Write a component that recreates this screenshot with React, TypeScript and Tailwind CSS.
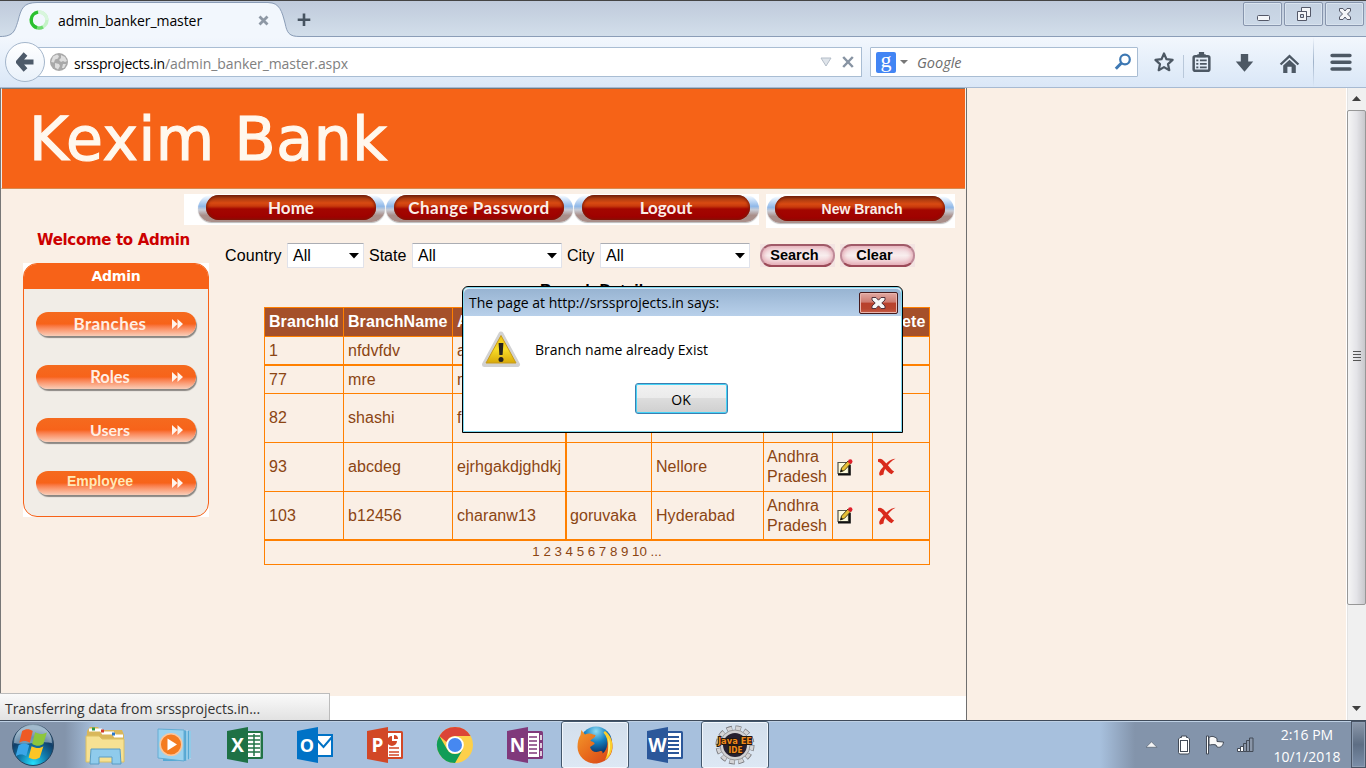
import type { ReactNode } from "react";

const UI = "font-['Open_Sans','Noto_Sans',sans-serif] whitespace-nowrap";

function Spinner() {
  return (
    <svg width="20" height="20" viewBox="0 0 20 20" fill="none" strokeWidth="3.4">
      <circle cx="10" cy="10" r="8" stroke="#c4f3c6" />
      <path d="M10 2a8 8 0 0 1 8 8" stroke="#d8f6dc" />
      <path d="M14 17A8 8 0 0 1 4 15.300" stroke="#6fdc70" />
      <path d="M8 17.700A8 8 0 0 1 9 2.100" stroke="#2ac02f" />
    </svg>
  );
}

function Globe() {
  return (
    <svg width="18" height="18" viewBox="0 0 18 18">
      <circle cx="9" cy="9" r="9" fill="#a9a9a9" />
      <path d="M3 3.500 7 1.500l2 1.500-1 2.500-3 1-1 3-2.800-.5zM11 2l4 2 2 4-2 1-2-1-2 1-2-2 2-2zM5 10l4 1 1 2-2 3.500-3-2zM13 11l3 0-2 4-2 0z" fill="#dedede" />
    </svg>
  );
}

function TabStrip() {
  return (
    <div className="relative flex h-[37px] shrink-0 border-t border-[#444] bg-gradient-to-b from-[#bfcadb] to-[#d3dfeb]">
      <svg className="absolute left-0 top-0" width="1366" height="36" viewBox="0 1 1366 36" fill="none">
        <path d="M0 37C15 37 15 30 18 21C21 9 23 3 37 3H268C282 3 282 14 285 23C288 33 288 37 300 37Z" fill="#f2f7fd" />
        <path d="M0 36.500C14 36.500 15 30 18 21C21 9 23 2.500 37 2.500H268C280 2.500 282 12 285 23C287 33 289 36.500 300 36.500H1366" stroke="#8b9db7" />
      </svg>
      <div className="relative flex h-[36px] w-[1243px] items-center pl-[29px] pt-[2px]">
        <Spinner />
        <span className={`${UI} ml-[9px] w-[204px] text-[14px] tracking-[-0.08px] text-black`}>admin_banker_master</span>
        <svg className="-ml-[4px]" width="11" height="11" viewBox="0 0 11 11"><path d="M1.500 1.500l8 8M9.500 1.500l-8 8" stroke="#8e98a5" strokeWidth="2.800" /></svg>
        <svg className="ml-[28px]" width="14" height="14" viewBox="0 0 14 14"><path d="M7 .5v12.500M.7 6.800h12.600" stroke="#465360" strokeWidth="2.600" /></svg>
      </div>
      <div className="relative flex gap-[2px] pt-[1px]">
        {[0, 1, 2].map((i) => (
          <div key={i} className="flex h-[24px] w-[39px] items-center justify-center rounded-[2px] border border-[#8795ad] bg-gradient-to-b from-[#c5d1e1] to-[#cbd8e7] shadow-[inset_0_0_0_1px_#d9e3ee]">
            <svg width="16" height="16" viewBox="0 0 16 16" fill="#f4f6f9" stroke="#545868">
              {i === 0 && <rect x="2.500" y="9.500" width="12" height="5" rx="1" />}
              {i === 1 && (
                <>
                  <path d="M5.500 1.500h9v9h-4v-5h-5z" />
                  <path fillRule="evenodd" d="M1.500 5.500h9v9h-9zM4.500 8.500h3v3h-3z" />
                </>
              )}
              {i === 2 && <path d="M2.500 2.500h3.500l2 2.500 2-2.500h3.500v2.500l-3 3 3 3v2.500H10l-2-2.500-2 2.500H2.500V11l3-3-3-3z" />}
            </svg>
          </div>
        ))}
      </div>
    </div>
  );
}

function NavBar() {
  return (
    <div className="relative flex h-[51px] shrink-0 items-start border-b border-[#a7bad2] bg-gradient-to-b from-[#f2f7fd] via-[#e6effa] to-[#dae7f7]">
      <div className="z-10 ml-[5px] mt-[5px] flex h-[40px] w-[40px] items-center justify-center rounded-full border border-[#a4b6cb] bg-gradient-to-b from-white to-[#e9f1fa]">
        <svg width="18" height="20" viewBox="0 0 18 20"><path d="M9.500 2 2.500 10l7 8M3 10h14.500" fill="none" stroke="#4d5a69" strokeWidth="5" /></svg>
      </div>
      <div className="-ml-[9px] mt-[10px] flex h-[30px] w-[826px] items-center border border-[#a9bdd3] bg-white pl-[13px]">
        <Globe />
        <div className={`${UI} ml-[6px] flex w-[746px] pt-[2px] text-[14px]`}>
          <span className="tracking-[-0.2px] text-black">srssprojects.in</span>
          <span className="tracking-[-0.07px] text-[#808080]">/admin_banker_master.aspx</span>
        </div>
        <svg width="12" height="10" viewBox="0 0 12 10"><path d="M1 1h10L6 9z" fill="#dfe4ea" stroke="#b4bdc8" /></svg>
        <svg className="ml-[10px]" width="12" height="12" viewBox="0 0 12 12"><path d="M1.200 1l9.600 10M10.800 1 1.200 11" stroke="#8894a3" strokeWidth="2.500" /></svg>
      </div>
      <div className="ml-[8px] mt-[10px] flex h-[30px] w-[268px] items-center rounded-[1px] border border-[#a9bdd3] bg-white pl-[5px]">
        <div className="flex h-[21px] w-[20px] items-center justify-center rounded-[2px] bg-[#4285f4] pb-[4px] font-['Liberation_Serif',serif] text-[22px] leading-none text-white">g</div>
        <svg className="ml-[4px]" width="8" height="4" viewBox="0 0 8 4"><path d="M0 0h8L4 4z" fill="#777" /></svg>
        <span className={`${UI} ml-[9px] w-[197px] pt-[2px] text-[14.500px] italic text-[#6d6d6d]`}>Google</span>
        <svg width="18" height="18" viewBox="0 0 18 18" fill="none" stroke="#3d78b3"><circle cx="11" cy="6.500" r="4.800" strokeWidth="2.200" /><path d="M7.500 10 1.800 15.800" strokeWidth="3" /></svg>
      </div>
      <svg className="ml-[14px] mt-[13px]" width="22" height="24" viewBox="0 0 22 24"><path d="M12 3.500l2.500 5.700 6.100.7-4.600 4.200 1.300 6.100L12 17.100l-5.300 3.100L8 14.100 3.400 9.900l6.100-.7z" fill="none" stroke="#4d5864" strokeWidth="2.200" strokeLinejoin="round" /></svg>
      <div className="ml-[9px] mt-[18px] h-[23px] w-px bg-[#b9c8da]" />
      <svg className="ml-[7px] mt-[14px]" width="21" height="23" viewBox="0 0 20 22" fill="none" stroke="#4d5864">
        <rect x="2.500" y="5" width="15" height="14" rx="1.500" strokeWidth="2.400" />
        <path d="M6 4.500h8M7.500 2.500h5" strokeWidth="3" />
        <path d="M5 9h2M8.500 9H15M5 12.300h2M8.500 12.300H15M5 15.600h2M8.500 15.600H15" strokeWidth="1.600" />
      </svg>
      <svg className="ml-[23px] mt-[16px]" width="19" height="20" viewBox="0 0 18 19"><path d="M5.500 1h7v7h4.800L9 17.800.7 8h4.800z" fill="#4d5864" /></svg>
      <svg className="ml-[25px] mt-[17px]" width="21" height="20" viewBox="0 0 20 19"><path d="M1.500 10 10 2l8.500 8" fill="none" stroke="#4d5864" strokeWidth="2.200" /><path d="M4 11l6-5.600L16 11v7h-4v-6H8v6H4z" fill="#4d5864" /></svg>
      <div className="ml-[13px] h-[50px] w-px bg-gradient-to-b from-transparent via-[#9fb2c9] to-transparent" />
      <svg className="ml-[16px] mt-[16px]" width="22" height="19" viewBox="0 0 21 18"><path d="M2 2.300h17M2 8.800h17M2 15.200h17" stroke="#4d5864" strokeWidth="3.400" strokeLinecap="round" /></svg>
    </div>
  );
}

function RedPill({ children, w, text }: { children: ReactNode; w: string; text: string }) {
  return (
    <div className={`flex h-[27px] ${w} items-start rounded-full bg-[linear-gradient(180deg,#fff_0,#dcebfc_12%,#8fb8e8_42%,#c9cdd6_55%,#a98f8a_75%,#a98f8a_100%)] pl-[8px] pr-[9px] shadow-[0_1px_1px_#bbb]`}>
      <div className="flex h-[25px] grow items-center justify-center rounded-full bg-[linear-gradient(180deg,#6b2a10_0,#a83a10_12%,#d94a12_32%,#c83a0c_44%,#a30600_56%,#9e0000_100%)] shadow-[inset_0_0_3px_1px_#7a1a08]">
        <span className={`whitespace-nowrap text-[#fbeee8] ${text}`}>{children}</span>
      </div>
    </div>
  );
}

const GOTHIC = "font-['Lato',sans-serif] font-bold";

function Select({ w }: { w: string }) {
  return (
    <div className={`flex h-[25px] ${w} items-center justify-between rounded-[1px] border border-[#e0e2ea] border-t-[#abadb3] bg-white pl-[5px] pr-[4px] text-black`}>
      <span>All</span>
      <svg width="10" height="6" viewBox="0 0 10 6"><path d="M0 0h10L5 5.500z" fill="#000" /></svg>
    </div>
  );
}

function PinkPill({ children }: { children: string }) {
  return (
    <div className="h-[23px] w-[75px] bg-[#f3e4e2]">
      <div className="flex h-[23px] w-[75px] items-center justify-center rounded-full border-2 border-[#c08a98] border-b-[#9c4a58] border-t-[#a05a68] bg-gradient-to-b from-[#efd3d8] via-[#f8eeee] to-[#ecc4ca] pr-[6px] shadow-[inset_0_0_5px_1px_#e3a5b0]">
        <span className="font-['Liberation_Sans',sans-serif] text-[14.500px] font-bold text-black">{children}</span>
      </div>
    </div>
  );
}

function SideButton({ label, text }: { label: string; text: string }) {
  return (
    <div className="relative flex h-[24px] w-[160px] items-center rounded-full bg-gradient-to-b from-[#f56a1e] via-[#f7631a] via-50% to-[#f8cdb8] shadow-[1px_2px_1px_#8b8783]">
      <span className={`w-[148px] whitespace-nowrap text-center ${text}`}>{label}</span>
      <svg className="absolute left-[135px] top-[7px]" width="13" height="10" viewBox="0 0 13 10"><path d="M1 0l5.500 5L1 10zM6.500 0 12 5l-5.500 5z" fill="#fff4ec" /></svg>
    </div>
  );
}

function EditIcon() {
  return (
    <svg width="16" height="17" viewBox="0 0 16 17">
      <path d="M1 3.500h10.500v11H1z" fill="#fdfbdc" stroke="#55554c" strokeWidth="1.200" />
      <path d="M12.800 6v9.500H1" fill="none" stroke="#111" strokeWidth="2" />
      <path d="M3.500 13l1-4 6.500-7 3 2.300-6.500 7z" fill="#e8c136" stroke="#3a3210" strokeWidth=".9" />
      <path d="M3.300 13.300l.8-3 2 1.600z" fill="#111" />
      <circle cx="13.300" cy="2.500" r="2.200" fill="#e0202c" />
    </svg>
  );
}

function DeleteIcon() {
  return (
    <svg width="19" height="18" viewBox="0 0 19 18" fill="#d92a1c">
      <path d="M1 1.200C3.500-.2 5.500 1.200 7.500 3.500l4.500 5c1.500 2 3.500 4.500 5.200 5l-2.600 2.700C11.500 15 9 12 7.200 9.500 5 6.500 3.800 4.500 1 3.700z" />
      <path d="M18.500.8C15 2.200 11.500 6.500 8.700 10c-1.300 2-2 4-2.200 6.500L3 17.800c-1.800-2-.3-5 2.200-7.800C8.500 6.500 12.500 1 18.500.8z" />
    </svg>
  );
}

type Row = { h: string; thick?: boolean; cells: string[]; head?: boolean };
const rows: Row[] = [
  { h: "h-[29px]", head: true, cells: ["BranchId", "BranchName", "Address", "Location", "City", "State", "Edit", "Delete"] },
  { h: "h-[28px]", cells: ["1", "nfdvfdv", "a", "", "", "", "", ""] },
  { h: "h-[29px]", thick: true, cells: ["77", "mre", "m", "", "", "", "", ""] },
  { h: "h-[49px]", cells: ["82", "shashi", "f", "", "", "Andhra Pradesh", "", ""] },
  { h: "h-[49px]", cells: ["93", "abcdeg", "ejrhgakdjghdkj", "", "Nellore", "Andhra Pradesh", "edit", "delete"] },
  { h: "h-[48px]", cells: ["103", "b12456", "charanw13", "goruvaka", "Hyderabad", "Andhra Pradesh", "edit", "delete"] },
];
const COLS = ["w-[79px]", "w-[109px]", "w-[113px]", "w-[86px]", "w-[112px]", "w-[69px]", "w-[40px]", "w-[57px]"];

function BranchTable() {
  return (
    <div className="ml-[56px] mt-[6px] w-[666px] border-b border-r border-[#ff8000] text-[16px] leading-[20px] tracking-[0.07px] text-[#8b4513]">
      {rows.map((r) => (
        <div key={r.cells[0]} className={`flex ${r.h} ${r.head ? "bg-[#a5502a] font-bold text-white" : ""}`}>
          {r.cells.map((c, i) => (
            <div key={i} className={`${COLS[i]} flex shrink-0 items-center border-[#ff8000] ${i === 3 || i === 5 ? "pl-[3px]" : "pl-[4px]"} ${r.thick ? "border-t-2" : "border-t"} ${i === 3 ? "border-l-2" : "border-l"}`}>
              {c === "edit" ? <EditIcon /> : c === "delete" ? <DeleteIcon /> : c}
            </div>
          ))}
        </div>
      ))}
      <div className="flex h-[25px] items-center justify-center border-l border-t-2 border-[#ff8000] pb-[2px] font-['Liberation_Sans',sans-serif] text-[13.300px] tracking-normal">
        1 2 3 4 5 6 7 8 9 10 ...
      </div>
    </div>
  );
}

function Page() {
  return (
    <div className="flex h-[632px] w-[967px] shrink-0 flex-col border-r border-[#6e6e6e] bg-white">
      <div className="h-[608px] border-l border-[#777] bg-[#faefe5] pr-px font-['Liberation_Sans',sans-serif]">
        <div className="flex h-[101px] items-center border-y border-l border-[#777] border-b-[#d88a50] border-l-[#eee] bg-[#f66317] pl-[27px]">
          <span className="font-['DejaVu_Sans',sans-serif] text-[60px] leading-none tracking-[0.6px] text-[#fff8ee] [-webkit-text-stroke:1.2px_#fff8ee]">Kexim Bank</span>
        </div>
        <div className="flex">
          <div className="ml-[22px] w-[185px] shrink-0">
            <div className="mt-[41px] whitespace-nowrap pl-[14px] font-['DejaVu_Sans',sans-serif] text-[15px] font-bold leading-[20px] tracking-[-0.32px] text-[#cc0000]">Welcome to Admin</div>
            <div className="mt-[13px] w-[186px] bg-white">
              <div className="flex h-[254px] flex-col items-center overflow-hidden rounded-[14px] border border-[#f76218] bg-[#f1ede7]">
                <div className="flex h-[25px] w-full shrink-0 items-center justify-center bg-[#f76218] font-['DejaVu_Sans',sans-serif] text-[14px] font-bold tracking-[-0.2px] text-white">Admin</div>
                <div className="flex flex-col gap-[29px] pt-[23px]">
                  <SideButton label="Branches" text={`${GOTHIC} text-[17px] tracking-[0.4px] text-[#ffeee3]`} />
                  <SideButton label="Roles" text={`${GOTHIC} text-[16.500px] text-[#ffeee3]`} />
                  <SideButton label="Users" text={`${GOTHIC} text-[16px] text-[#ffeee3]`} />
                  <SideButton label="Employee" text="font-bold text-[14px] text-[#ffe9b8] pr-[20px] pb-[3px]" />
                </div>
              </div>
            </div>
          </div>
          <div className="flex grow flex-col">
            <div className="-ml-[24px] mt-[5px] flex items-start gap-[7px]">
              <div className="flex h-[31px] w-[575px] gap-[1px] bg-white pl-[14px] pt-[1px]">
                <RedPill w="w-[187px]" text={`${GOTHIC} text-[17px]`}>Home</RedPill>
                <RedPill w="w-[187px]" text={`${GOTHIC} text-[17px] tracking-[0.5px]`}>Change Password</RedPill>
                <RedPill w="w-[185px]" text={`${GOTHIC} text-[17px]`}>Logout</RedPill>
              </div>
              <div className="h-[34px] w-[189px] bg-white pl-px pt-[2px]">
                <RedPill w="w-[187px]" text="font-bold text-[14px] pl-[4px] pt-[1px]">New Branch</RedPill>
              </div>
            </div>
            <div className="ml-[17px] mt-[15px] flex items-center text-[16px] text-black">
              <span className="w-[57px] tracking-[0.1px]">Country</span>
              <div className="ml-[5px]"><Select w="w-[77px]" /></div>
              <span className="ml-[5px] w-[43px]">State</span>
              <Select w="w-[150px]" />
              <span className="ml-[5px] w-[33px]">City</span>
              <Select w="w-[150px]" />
              <div className="ml-[10px] flex gap-[5px]">
                <PinkPill>Search</PinkPill>
                <PinkPill>Clear</PinkPill>
              </div>
            </div>
            <div className="mt-[13px] h-[20px] pl-[332px] text-[16px] font-bold leading-[20px] text-black">Branch Details</div>
            <BranchTable />
          </div>
        </div>
      </div>
    </div>
  );
}

function ScrollBar() {
  return (
    <div className="ml-auto flex w-[20px] flex-col items-center border-l border-[#fff] bg-[#f0f0f0] shadow-[inset_1px_0_0_#e3e3e3]">
      <svg className="mt-[8px]" width="9" height="5" viewBox="0 0 9 5"><path d="M4.500 0 9 5H0z" fill="#404040" /></svg>
      <div className="mt-[9px] flex h-[495px] w-[19px] items-center justify-center rounded-[2px] border border-[#979797] bg-gradient-to-r from-[#f5f5f5] via-[#e4e4e8] to-[#c8c8cc]">
        <div className="-mt-[3px] flex flex-col gap-[2px]">{[0, 1, 2, 3].map((i) => <div key={i} className="h-px w-[8px] bg-[#555]" />)}</div>
      </div>
      <svg className="mt-[101px]" width="9" height="5" viewBox="0 0 9 5"><path d="M0 0h9L4.500 5z" fill="#404040" /></svg>
    </div>
  );
}

function Alert() {
  return (
    <div className="absolute left-[462px] top-[286px] h-[147px] w-[441px] rounded-t-[6px] border border-black bg-white shadow-[inset_0_0_0_1px_#7fd8f0]">
      <div className="mx-px mt-px flex h-[28px] items-center justify-between rounded-t-[5px] border-t border-[#d8e6f5] bg-gradient-to-b from-[#98b4d2] to-[#b8d0ea] pl-[5px] pr-[3px]">
        <span className={`${UI} text-[14px] text-black`}>The page at http://srssprojects.in says:</span>
        <div className="flex h-[22px] w-[39px] items-center justify-center rounded-[2px] border border-[#451a1c] bg-[linear-gradient(180deg,#e2a9a3_0,#cd7a6f_46%,#b8402c_50%,#b8452f_80%,#c8614c_100%)] shadow-[inset_0_0_0_1px_#e8b5ae]">
          <svg width="15" height="14" viewBox="0 0 15 14"><path d="M1 1.500h4l2.500 2.700L10 1.500h4V4l-3.200 3L14 10v2.500h-4L7.500 9.800 5 12.500H1V10l3.200-3L1 4z" fill="#f6f6f6" stroke="#51323c" /></svg>
        </div>
      </div>
      <div className="flex h-[67px] items-center pl-[18px]">
        <svg width="40" height="37" viewBox="0 0 40 37">
          <defs><linearGradient id="warn" x1="0" y1="0" x2="0" y2="1"><stop offset="0" stopColor="#eec312" /><stop offset=".5" stopColor="#f7dc28" /><stop offset="1" stopColor="#d8a90a" /></linearGradient></defs>
          <path d="M20 3 36.500 33.500h-33z" fill="#dadada" stroke="#d2d2d2" strokeWidth="5" strokeLinejoin="round" />
          <path d="M20 4.500 35 32H5z" fill="url(#warn)" stroke="#c79a1c" />
          <path d="M17.600 12h4.800l-.8 12h-3.200z" fill="#252320" /><circle cx="20" cy="28.500" r="2.500" fill="#252320" />
        </svg>
        <span className={`${UI} ml-[14px] text-[14px] text-black`}>Branch name already Exist</span>
      </div>
      <div className={`${UI} ml-[172px] flex h-[31px] w-[93px] items-center justify-center rounded-[3px] border border-[#3c7fb1] bg-[linear-gradient(180deg,#f2f2f2_0,#ebebeb_49%,#dddddd_50%,#cfcfcf_100%)] pr-[1px] pt-[1px] text-[14px] text-black shadow-[inset_0_0_0_1px_#46d4f7]`}>OK</div>
    </div>
  );
}

function Office({ color, dark, letter, children }: { color: string; dark: string; letter: string; children: ReactNode }) {
  return (
    <svg width="36" height="36" viewBox="0 0 36 36">
      <rect x="18" y="4" width="18" height="28" rx="1.500" fill={color} />
      {children}
      <path d="M0 4 21 0v36L0 32z" fill={dark} />
      <text x="10.500" y="25" textAnchor="middle" fontFamily="Open Sans" fontWeight="700" fontSize="19" fill="#fff">{letter}</text>
    </svg>
  );
}

function Firefox() {
  return (
    <svg width="38" height="38" viewBox="0 0 38 38">
      <defs>
        <radialGradient id="fx" cx=".5" cy=".15" r=".7"><stop offset="0" stopColor="#8fdcf4" /><stop offset=".5" stopColor="#1580c0" /><stop offset="1" stopColor="#0a2f63" /></radialGradient>
        <linearGradient id="fox" x1="0" y1="0" x2="1" y2="1"><stop offset="0" stopColor="#f29a2c" /><stop offset=".5" stopColor="#e86a1c" /><stop offset="1" stopColor="#d4411a" /></linearGradient>
      </defs>
      <circle cx="20" cy="16.500" r="16" fill="url(#fx)" />
      <path d="M29 5c6 5 8 11 7.500 17C36 31 28 37.500 19 37.500S1.500 30 1.500 21c0-5 1-9 3-12l.8-5L9 8.500c3-1.500 6-1.300 8 0l2.500.5c0 3-5 4-5 6 2 1 4.500 1 4 3l-4.500 3c1 4 5 6 9 4.500 3-1 4 0 3.500 2C32 24 33 14 29 5z" fill="url(#fox)" />
      <path d="M29 5c6 5 8.500 12 7 18.500-1 5-4 8.500-7 10.500C33 27 34 14 27.500 6.500z" fill="#fbd02c" />
      <path d="M32.500 12c2.500 6 2 13-1 18 1-6 1-12 1-18z" fill="#fff09a" />
    </svg>
  );
}

function Gear() {
  return (
    <svg width="42" height="40" viewBox="0 0 42 40">
      <circle cx="21" cy="20" r="17" fill="none" stroke="#77777b" strokeWidth="5" strokeDasharray="5.500 3.400" />
      <circle cx="21" cy="20" r="16.700" fill="none" stroke="#d4d4d6" strokeWidth="4" strokeDasharray="4.500 4.244" strokeDashoffset="-.5" />
      <circle cx="21" cy="20" r="15" fill="#d0d0d2" stroke="#98989b" />
      <circle cx="21" cy="20" r="12" fill="#262030" />
      <g fill="#f08a1c" stroke="#22170e" strokeWidth="2" paintOrder="stroke" fontFamily="DejaVu Sans" fontWeight="700">
        <text x="4" y="18.500" fontSize="9" textLength="34" lengthAdjust="spacingAndGlyphs">Java EE</text>
        <text x="14.500" y="27.500" fontSize="9" textLength="14" lengthAdjust="spacingAndGlyphs">IDE</text>
      </g>
    </svg>
  );
}

function Slot({ children, active }: { children: ReactNode; active?: boolean }) {
  return (
    <div className="flex h-[48px] w-[70px] items-center justify-center">
      {active ? (
        <div className="flex h-[48px] w-[68px] items-center justify-center rounded-[3px] border border-[#42566b] bg-gradient-to-b from-[#d3dfec] to-[#dde8f4] shadow-[inset_0_0_0_1px_#f2f7fc]">{children}</div>
      ) : children}
    </div>
  );
}

function TaskBar() {
  return (
    <div className="flex h-[48px] shrink-0 border-t border-[#3f4b5b] bg-[linear-gradient(90deg,#8394ab_0,#8394ab_65px,#a7c0dd_95px,#a7c0dd_1100px,#8394ab_1135px)] shadow-[inset_0_1px_0_#bed0e4]">
      <div className="flex w-[70px] items-center pl-[11px]">
        <svg width="44" height="44" viewBox="0 0 44 44">
          <defs><radialGradient id="orb" cx=".5" cy=".95" r=".85"><stop offset="0" stopColor="#22e0fc" /><stop offset=".4" stopColor="#127cad" /><stop offset=".75" stopColor="#103d68" /><stop offset="1" stopColor="#6e91ad" /></radialGradient></defs>
          <circle cx="22" cy="22" r="20.500" fill="url(#orb)" stroke="#23415d" />
          <path d="M3 20A19 19 0 0 1 41 20C30 17 14 23 3 20z" fill="#d4e4ee" opacity=".5" />
          <g transform="translate(-4.200 -3.800) scale(1.18)">
            <path d="M13 10c3-2 6-2 9 0l-2.500 10c-3-2-6-2-9 0z" fill="#ee5a24" />
            <path d="M24 11c4 2 7 2 10 0l-3 10c-3 2-6 2-9.500 0z" fill="#8cc63c" />
            <path d="M10 22c3-2 6-2 9 0l-2.500 9.500c-3-2-6-2-9 0z" fill="#3ba6e8" />
            <path d="M21 23c4 2 7 2 10 0l-3 9.500c-3 2-6 2-9.500 0z" fill="#fdc526" />
          </g>
        </svg>
      </div>
      <Slot>
        <svg width="40" height="40" viewBox="0 0 40 40">
          <path d="M2 6 5 2h8l2 3h22l2 5v26H1z" fill="#d9b75a" />
          <path d="M4 5h12l2 3h10l2 3h8" fill="none" stroke="#fff" strokeWidth="3" />
          <path d="M7 4h3" stroke="#2c9a4a" strokeWidth="3" /><path d="M16 6h3" stroke="#d23a2a" strokeWidth="3" /><path d="M27 9h3" stroke="#2a78c8" strokeWidth="3" />
          <path d="M1 11h13l3 3h22v23H1z" fill="#f6e193" stroke="#dcc063" />
          <path d="M5 39l1-15h29l1 15h-9v-7H14v7z" fill="#8fcbec" stroke="#5a9cc4" />
        </svg>
      </Slot>
      <Slot>
        <svg className="-ml-[1px]" width="36" height="36" viewBox="0 0 36 36">
          <path d="M6 2l28 2v27l-6 3H6z" fill="#55a8d4" /><path d="M30 3v30M33 4v28" stroke="#d0ecfa" />
          <path d="M1 2l26 1v31L1 31z" fill="#9bd2ee" stroke="#64acd3" />
          <circle cx="14" cy="17.500" r="10.800" fill="#f47b20" stroke="#fbc69c" strokeWidth="1.500" /><path d="M10.500 11.500l9.500 6-9.500 6z" fill="#fff" />
        </svg>
      </Slot>
      <Slot>
        <Office color="#217346" dark="#1e7145" letter="X"><rect x="20" y="6" width="13.500" height="24" fill="#fff" /><path d="M21 9h12M21 13h12M21 17h12M21 21h12M21 25h12" stroke="#217346" strokeWidth="1.500" /><path d="M27 7v22" stroke="#217346" strokeWidth="1.500" /></Office>
      </Slot>
      <Slot>
        <svg width="36" height="36" viewBox="0 0 36 36"><rect x="18" y="8" width="17" height="21" fill="#fff" stroke="#0072c6" strokeWidth="2" /><path d="M20 13l6.500 7L35 10" fill="none" stroke="#0072c6" strokeWidth="2" /><path d="M0 4 21 0v36L0 32z" fill="#0072c6" /><text x="10" y="25" textAnchor="middle" fontFamily="Open Sans" fontWeight="700" fontSize="18" fill="#fff">O</text></svg>
      </Slot>
      <Slot>
        <Office color="#d24726" dark="#d24726" letter="P"><rect x="20" y="6" width="14" height="24" fill="#fff" /><path d="M22 21h10M22 25h10M22 28h10" stroke="#d24726" strokeWidth="1.700" /><path d="M25 9a5 5 0 1 0 5 5h-5z" fill="#d24726" /><path d="M27 8v4h4a4 4 0 0 0-4-4z" fill="#d24726" /></Office>
      </Slot>
      <Slot>
        <svg width="38" height="38" viewBox="0 0 38 38">
          <circle cx="19" cy="19" r="18" fill="#fdd04a" />
          <path d="M3.400 10A18 18 0 0 1 34.600 10H19a9 9 0 0 0-8.500 6z" fill="#db4437" />
          <path d="M3.400 10A18 18 0 0 0 19 37l7.800-13.500a9 9 0 0 1-15.600 0z" fill="#109d58" />
          <circle cx="19" cy="19" r="8.800" fill="#fff" /><circle cx="19" cy="19" r="7" fill="#4688f1" />
        </svg>
      </Slot>
      <Slot>
        <Office color="#80397b" dark="#80397b" letter="N"><rect x="20" y="6" width="12" height="24" fill="#fff" /><path d="M22 10h8M22 14h8M22 18h8M22 22h8M22 26h8" stroke="#80397b" strokeWidth="1.600" /><path d="M34 8v5M34 16v5M34 24v5" stroke="#fff" strokeWidth="1.500" /></Office>
      </Slot>
      <Slot active><Firefox /></Slot>
      <Slot>
        <Office color="#2b579a" dark="#2b579a" letter="W"><rect x="20" y="6" width="14" height="24" fill="#fff" /><path d="M21 10h11M21 14h11M21 18h11M21 22h11M21 26h11" stroke="#2b579a" strokeWidth="1.800" /></Office>
      </Slot>
      <Slot active><Gear /></Slot>
      <div className="ml-auto flex items-center">
        <svg width="13" height="8" viewBox="0 0 11 7"><path d="M5.500 0.700 10.300 5.500H.7z" fill="#f5f5f5" stroke="#5c6878" strokeWidth=".7" /></svg>
        <svg className="ml-[19px]" width="14" height="20" viewBox="0 0 14 20"><path d="M4.500 2.500V1h5v1.500H11l1.500 1.500v13.500L11.500 19h-9l-1-1.500V4L3 2.500z" fill="#fff" stroke="#434b57" /><rect x="3.500" y="5.500" width="7" height="11" fill="#fff" stroke="#434b57" /></svg>
        <svg className="ml-[14px]" width="20" height="20" viewBox="0 0 20 20"><path d="M1.500 1h2v18h-2z" fill="#fff" stroke="#434b57" /><path d="M4 2.500c3-2 5-1 8 1v3l6.500.5c-.5 4-3 6-6.500 5l-1-2c-3-1-5 0-7 0z" fill="#f8f8f8" stroke="#434b57" /></svg>
        <svg className="ml-[12px]" width="17" height="16" viewBox="0 0 17 16" stroke="#434b57"><path d="M.5 11.500h3v3h-3z" fill="#fff" /><path d="M3.500 9.500h3v5h-3z" fill="#fff" /><path d="M6.500 6.500h3v8h-3zM9.500 3.500h3v11h-3zM12.500 1h3.500v13.500h-3.500z" fill="#8a96a8" /></svg>
        <div className={`${UI} ml-[9px] w-[88px] pt-[2px] text-center text-[14px] leading-[22px] text-white`}>
          <div>2:16 PM</div>
          <div className="tracking-[0.1px]">10/1/2018</div>
        </div>
        <div className="h-[47px] w-[15px] border border-[#4a5566] bg-gradient-to-b from-[#8c98aa] via-[#5e6e84] to-[#7b8ea8] shadow-[inset_0_0_0_1px_#8d9db2]" />
      </div>
    </div>
  );
}

export default function App() {
  return (
    <div className="relative flex h-[768px] w-[1366px] flex-col overflow-hidden bg-white">
      <TabStrip />
      <NavBar />
      <div className="flex h-[632px] shrink-0 bg-[#faefe5]">
        <Page />
        <ScrollBar />
      </div>
      <div className="absolute left-0 top-[693px] flex h-[27px] w-[330px] items-center border-r border-t border-[#bcbcbc] bg-gradient-to-b from-[#fafafa] to-[#e2e2e2] pl-[5px] pt-[3px]">
        <span className={`${UI} text-[14px] tracking-[-0.05px] text-[#333]`}>Transferring data from srssprojects.in...</span>
      </div>
      <TaskBar />
      <Alert />
    </div>
  );
}
